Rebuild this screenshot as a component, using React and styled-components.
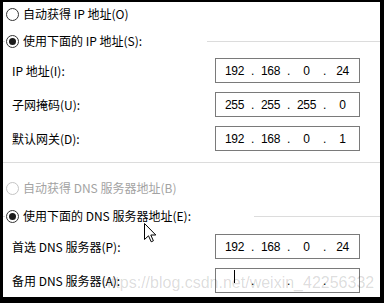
import React from 'react'
import styled, { createGlobalStyle } from 'styled-components'

const GlobalStyle = createGlobalStyle`
  html, body {
    margin: 0;
    padding: 0;
    background: #000;
  }
  body {
    font-family: "Noto Sans CJK SC", "Microsoft YaHei", sans-serif;
    font-size: 12px;
    color: #000;
  }
`

// black frame round the captured dialog area
const Frame = styled.div`
  width: 384px;
  height: 303px;
  box-sizing: border-box;
  padding: 2px 0 0 3px;
  background: #000;
`
const Panel = styled.div`
  position: relative;
  width: 377px;
  height: 295px;
  box-sizing: border-box;
  padding-top: 5px;
  background: #fff;
  overflow: hidden;
`

const RadioRow = styled.label`
  display: flex;
  align-items: center;
  gap: 4px;
  height: 14px;
  line-height: 14px;
  white-space: nowrap;
  margin-left: ${p => p.$indent || 0}px;
  margin-top: ${p => p.$top || 0}px;
  color: ${p => (p.$disabled ? '#a3a3a3' : '#000')};
`
const RadioMark = styled.span`
  flex: none;
  display: flex;
  align-items: center;
  justify-content: center;
  width: 13px;
  height: 13px;
  box-sizing: border-box;
  border-radius: 50%;
  border: 1px solid ${p => (p.$disabled ? '#c4c4c4' : '#333')};
  background: #fff;

  &::after {
    content: '';
    display: ${p => (p.$checked ? 'block' : 'none')};
    width: 7px;
    height: 7px;
    border-radius: 50%;
    background: #1a1a1a;
  }
`

const Radio = ({ checked, disabled, children, ...rest }) => (
  <RadioRow $disabled={disabled} {...rest}>
    <RadioMark $checked={checked} $disabled={disabled} />
    <span>{children}</span>
  </RadioRow>
)

const Group = styled.fieldset`
  min-width: 0;
  margin: ${p => p.$top}px -10px 0 -8px;
  padding: ${p => p.$padTop}px 0 11px 9px;
  border: 1px solid #dcdcdc;
  display: flex;
  flex-direction: column;
  gap: 9px;
`
const Legend = styled.legend`
  width: ${p => p.$width}px;
  box-sizing: border-box;
  padding: 0 0 0 1px;
  background: #fff;
`

const FieldRow = styled.div`
  display: grid;
  grid-template-columns: 203px 145px;
  align-items: center;
  margin-left: 7px;
  white-space: nowrap;
`

const IpBox = styled.div`
  display: flex;
  align-items: center;
  width: 145px;
  height: 25px;
  box-sizing: border-box;
  padding-left: 2px;
  border: 1px solid #7a7a7a;
  font-family: "Liberation Sans", Arial, sans-serif;
  font-size: 12px;
  letter-spacing: -0.4px;
  line-height: 14px;
`
const Octet = styled.span`
  display: flex;
  align-items: center;
  justify-content: center;
  width: 33px;
  height: 14px;
`
const Dot = styled.span`
  width: 3px;
  text-align: center;
`
const Caret = styled.span`
  width: 1px;
  height: 13px;
  margin-bottom: 8px;
  background: #000;
`

const IpInput = ({ value = ['', '', '', ''], focused }) => (
  <IpBox>
    {value.map((part, i) => (
      <React.Fragment key={i}>
        {i > 0 && <Dot>.</Dot>}
        <Octet>{focused && i === 0 ? <Caret /> : part}</Octet>
      </React.Fragment>
    ))}
  </IpBox>
)

const Field = ({ label, ...rest }) => (
  <FieldRow>
    <span>{label}</span>
    <IpInput {...rest} />
  </FieldRow>
)

const Watermark = styled.div`
  position: absolute;
  left: 99px;
  top: 272px;
  font-family: "Liberation Sans", Arial, sans-serif;
  font-size: 16px;
  color: rgba(0, 0, 0, 0.15);
  white-space: nowrap;
  pointer-events: none;
`

const Pointer = styled.svg`
  position: absolute;
  left: 141px;
  top: 221px;
`

const MouseArrow = () => (
  <Pointer width="13" height="20" viewBox="0 0 13 20">
    <path
      d="M0.5 0.5 L0.5 16.5 L4.5 12.8 L7.2 18.8 L9.4 17.8 L6.8 12 L11.8 12 Z"
      fill="#fff"
      stroke="#000"
      strokeWidth="1"
      strokeLinejoin="miter"
    />
  </Pointer>
)

export default function App() {
  return (
    <>
      <GlobalStyle />
      <Frame>
        <Panel>
          <Radio $indent={3}>自动获得 IP 地址(O)</Radio>

          <Group $top={13} $padTop={10}>
            <Legend $width={202}>
              <Radio checked>使用下面的 IP 地址(S):</Radio>
            </Legend>
            <Field label="IP 地址(I):" value={['192', '168', '0', '24']} />
            <Field label="子网掩码(U):" value={['255', '255', '255', '0']} />
            <Field label="默认网关(D):" value={['192', '168', '0', '1']} />
          </Group>

          <Radio $indent={3} $top={18} disabled>
            自动获得 DNS 服务器地址(B)
          </Radio>

          <Group $top={14} $padTop={11}>
            <Legend $width={249}>
              <Radio checked>使用下面的 DNS 服务器地址(E):</Radio>
            </Legend>
            <Field label="首选 DNS 服务器(P):" value={['192', '168', '0', '24']} />
            <Field label="备用 DNS 服务器(A):" focused />
          </Group>

          <Watermark>https://blog.csdn.net/weixin_42256332</Watermark>
          <MouseArrow />
        </Panel>
      </Frame>
    </>
  )
}
